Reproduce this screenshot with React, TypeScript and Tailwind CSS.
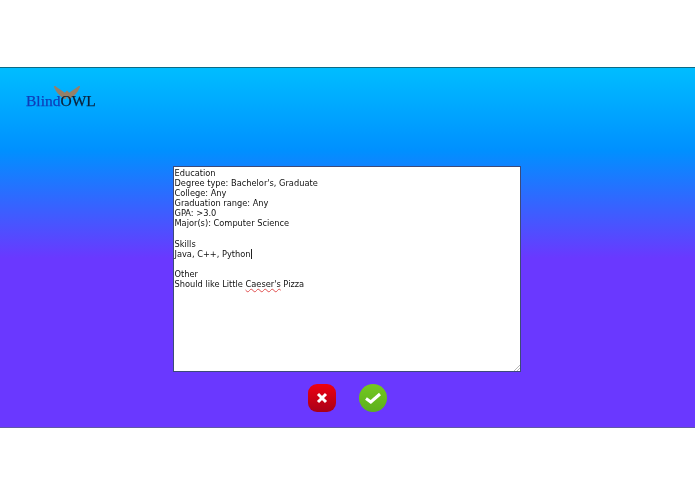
const lines = [
  'Education',
  "Degree type: Bachelor's, Graduate",
  'College: Any',
  'Graduation range: Any',
  'GPA: >3.0',
  'Major(s): Computer Science',
  '',
  'Skills',
];

function Logo() {
  return (
    <div className="relative w-[72px] h-[24px] font-['Liberation_Serif',serif] text-[15.5px] leading-[24px] whitespace-nowrap blur-[0.35px]">
      <svg className="absolute left-[28px] top-[-3px] blur-[0.5px]" width="26" height="14" viewBox="0 0 26 14">
        <path d="M1 1 C3 6 7 10 11 12 L13 8 L15 12 C19 10 23 6 25 1 C22 3 18 6 15 8 L13 6 L11 8 C8 6 4 3 1 1 Z" fill="#94806a" stroke="#94806a" strokeWidth="2" />
      </svg>
      <span className="relative text-[#0f3db8] [-webkit-text-stroke:0.25px_#0f3db8]">Blind</span>
      <span className="relative text-[#0c2038] [-webkit-text-stroke:0.25px_#0c2038]">OWL</span>
    </div>
  );
}

function App() {
  return (
    <div className="w-[695px] h-[494px] bg-white flex flex-col overflow-hidden">
      <div className="h-[67px]" />
      <div className="h-[361px] border-t border-t-[#0b6a86] border-b border-b-[#5f58a8] bg-[linear-gradient(180deg,#00bdff_0%,#0090ff_23%,#6a38ff_53%,#6a38ff_100%)] flex flex-col">
        <div className="h-[98px] pl-[26px] pt-[21px]">
          <Logo />
        </div>
        <div className="flex pl-[173px]">
          <div className="relative w-[348px] h-[206px] bg-white border border-[#3d4a7a] pl-[0.5px] pt-[1px] font-['DejaVu_Sans',sans-serif] text-[8.25px] leading-[10.1px] text-[#111] whitespace-pre blur-[0.2px]">
            {lines.map((line, i) => (
              <div key={i} className="h-[10.1px]">{line}</div>
            ))}
            <div className="h-[10.1px]">Java, C++, Python<span className="border-r border-[#222]" /></div>
            <div className="h-[10.1px]" />
            <div className="h-[10.1px]">Other</div>
            <div className="h-[10.1px]">
              Should like Little <span className="underline decoration-wavy decoration-[#e05050] decoration-[0.5px]">Caeser's</span> Pizza
            </div>
            <svg className="absolute right-0 bottom-0" width="6" height="6" viewBox="0 0 6 6">
              <path d="M0 6 L6 0 M3 6 L6 3" stroke="#9a9a9a" strokeWidth="0.7" />
            </svg>
          </div>
        </div>
        <div className="flex pl-[308px] gap-[23px] mt-[12px]">
          <button className="w-[28px] h-[28px] rounded-[9px] bg-[linear-gradient(180deg,#ee0010,#a80018)] flex items-center justify-center blur-[0.3px]">
            <svg width="12" height="12" viewBox="0 0 12 12">
              <path d="M2 2 L10 10 M10 2 L2 10" stroke="#fff" strokeWidth="3" />
            </svg>
          </button>
          <button className="w-[28px] h-[28px] rounded-full bg-[linear-gradient(180deg,#74c820,#5cb01c)] flex items-center justify-center blur-[0.3px]">
            <svg width="18" height="14" viewBox="0 0 18 14">
              <path d="M2 7.5 L6.8 11 L16 3" fill="none" stroke="#fff" strokeWidth="3" />
            </svg>
          </button>
        </div>
      </div>
    </div>
  );
}

export default App;
